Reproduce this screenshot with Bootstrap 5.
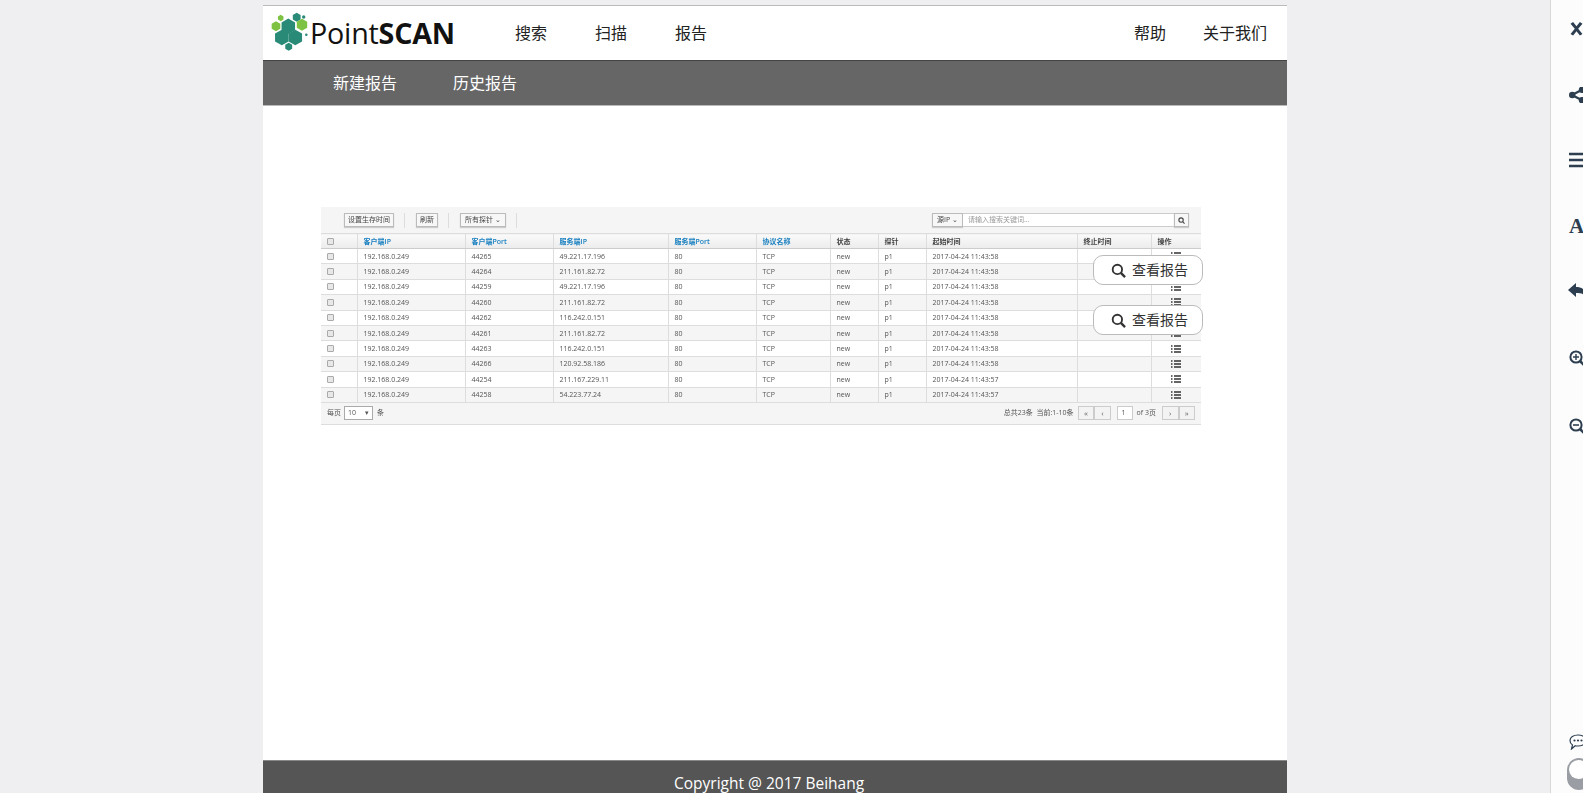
<!DOCTYPE html>
<html lang="zh-CN">
<head>
  <meta charset="UTF-8" />
  <meta name="viewport" content="width=device-width, initial-scale=1.0" />
  <title>PointSCAN</title>
  <link href="https://cdn.jsdelivr.net/npm/bootstrap@5.3.0/dist/css/bootstrap.min.css" rel="stylesheet" />
  <style>
    html, body { height: 100%; }
    body {
      background: #efeff1;
      overflow: hidden;
      font-family: "Open Sans", "Noto Sans CJK SC", sans-serif;
    }
    #pageWrap { height: 793px; }
    #mainCol { width: 1024px; margin: 5px auto 0; background: #fff; border-top: 1px solid #bbb; }
    #sidePanel { width: 33px; flex-shrink: 0; background: #fcfcfc; border-left: 1px solid #d8d8d8; padding: 22px 0 3px 18px; overflow: hidden; }

    /* header */
    #topBar { height: 55px; border-bottom: 1px solid #444; padding: 0 20px 0 5px; }
    .logoText { font-size: 28.7px; line-height: 1; color: #111; letter-spacing: -.2px; margin: 0 60px 0 0; }
    .logoText b { font-weight: 700; }
    .topLink { font-size: 16px; color: #222; padding: 0; }
    #topBar .topLink:hover { color: #222; }
    #subBar { height: 45px; background: #666; border-bottom: 1px solid #bbb; padding-left: 70px; column-gap: 56px; }
    .subLink { font-size: 16px; color: #fff; padding: 0; }
    #contentArea { padding: 101px 0 0 58px; }
    #pageFooter { height: 33px; background: #555; border-top: 1px solid #888; color: #fff; font-size: 15.5px; padding: 11px 0 0 411px; white-space: nowrap; overflow: hidden; }

    /* the report screenshot */
    #shotWrap { width: 882px; }
    #shotBox { width: 880px; height: 217px; background: #f5f5f5; filter: blur(.3px); color: #555; font-size: 7px; font-family: "Open Sans", "Noto Sans CJK SC", sans-serif; }
    .shotBar { height: 26px; padding: 0 12px 0 23px; }
    .shotBtn { height: 14px; font-size: 7px; line-height: 12px; padding: 0 3px; color: #444; background: #f7f7f7; border: 1px solid #bbb; border-radius: 0; box-shadow: 0 1px 1px #ccc; }
    .shotBtnWide { padding: 0 4px; }
    .shotSep { width: 1px; height: 15px; background: #ddd; margin: 0 11px 0 10px; }
    .shotSearch { width: 211px; height: 14px; font-size: 7px; line-height: 12px; padding: 0 5px; color: #999; background: #fff; border: 1px solid #ccc; border-left: 0; border-right: 0; }
    .shotTable { table-layout: fixed; width: 880px; margin: 0; font-size: 7px; border-top: 1px solid #ddd; }
    .shotTable th, .shotTable td { padding: 0 6px; height: 15.4px; line-height: 13px; vertical-align: middle; border-right: 1px solid #ddd; border-bottom: 1px solid #ddd; color: #555; font-weight: 400; white-space: nowrap; background: #fff; box-shadow: none; }
    .shotTable th { height: 15px; background: linear-gradient(#fafafa, #ececec); color: #444; font-weight: 600; border-bottom: 1px solid #ccc; }
    .shotTable th.sortCol { color: #1a80c0; }
    .shotTable tbody tr:nth-child(even) td { background: #f5f5f5; }
    .shotTable th:last-child, .shotTable td:last-child { border-right: 0; }
    .shotCheck { width: 7px; height: 7px; margin: 0; display: block; background: #e8e8e8; border: 1px solid #aaa; border-radius: 1px; appearance: none; }
    .shotPager { height: 22px; padding: 0 6px; border-bottom: 1px solid #ddd; }
    .shotSelect { width: 29px; height: 14px; padding: 0 3px; background: #fff; border: 1px solid #aaa; margin: 0 4px 0 3px; }
    .pageBtn { width: 16.5px; height: 14px; background: #f3f3f3; border: 1px solid #ccc; text-align: center; line-height: 11px; font-size: 8px; color: #666; }
    .pageInput { width: 16px; height: 14px; background: #fff; border: 1px solid #ccc; line-height: 12px; padding-left: 4px; margin: 0 4px 0 6px; }
    .pageOf { margin-right: 6px; }

    /* white buttons lying over the screenshot */
    .reportBtn { position: absolute; left: 772px; width: 110px; height: 30px; display: flex; align-items: center; padding: 0 0 0 17px; gap: 6px; font-size: 14px; line-height: 1; color: #333; background: #fff; border: 1px solid #bbb; border-radius: 10px; }
    .reportBtn:hover { color: #333; background: #fff; border-color: #bbb; }
    .btnTop { top: 48px; }
    .btnLow { top: 98px; }

    .sideIcon { display: block; width: 20px; height: 16px; flex-shrink: 0; margin-bottom: 49px; color: #2c3e50; }
    .sideLetter { font: 700 21px/18px "Liberation Serif", serif; color: #2c3e50; margin-bottom: 48px; flex-shrink: 0; }
    .replyIcon { margin-left: -1px; margin-bottom: 51px; }
    .zoomInIcon { margin-bottom: 52px; }
    .sideToggle { width: 24px; height: 32px; flex-shrink: 0; margin: 8px 0 0 -2px; background: #9a9da3; border-radius: 12px; padding: 2px; }
    .sideToggle span { display: block; width: 19px; height: 19px; background: #fff; border-radius: 50%; }
  </style>
</head>
<body>
  <div id="pageWrap" class="d-flex">
    <div class="flex-grow-1 d-flex">
      <div id="mainCol" class="d-flex flex-column">
        <header id="topBar" class="d-flex align-items-center flex-shrink-0">
          <svg width="42" height="50" viewBox="0 0 42 50" class="flex-shrink-0">
            <defs><path id="hexCell" d="M0-1L.866-.5V.5L0 1-.866.5V-.5z" /></defs>
            <g fill="#2a8a78">
              <use href="#hexCell" transform="translate(20.3 18.300) scale(7.800)" />
              <use href="#hexCell" transform="translate(13.8 29.500) scale(7.800)" />
              <use href="#hexCell" transform="translate(27.3 29.500) scale(7.800)" />
              <use href="#hexCell" transform="translate(20.7 38.800) scale(4)" />
              <use href="#hexCell" transform="translate(28.7 9.200) scale(4.500)" />
              <circle cx="35.700" cy="9" r="1.700" />
              <circle cx="38.300" cy="26.700" r="1.300" />
            </g>
            <g fill="#7dc242">
              <use href="#hexCell" transform="translate(34 16.700) scale(6)" />
              <use href="#hexCell" transform="translate(8 18.300) scale(5)" />
              <use href="#hexCell" transform="translate(12.700 10) scale(3.200)" />
            </g>
          </svg>
          <span class="logoText">Point<b>SCAN</b></span>
          <nav class="nav gap-5 flex-grow-1">
            <a class="nav-link topLink" href="#">搜索</a>
            <a class="nav-link topLink" href="#">扫描</a>
            <a class="nav-link topLink" href="#">报告</a>
          </nav>
          <nav class="nav" style="gap:37px">
            <a class="nav-link topLink" href="#">帮助</a>
            <a class="nav-link topLink" href="#">关于我们</a>
          </nav>
        </header>
        <nav id="subBar" class="nav align-items-center flex-shrink-0">
          <a class="nav-link subLink" href="#">新建报告</a>
          <a class="nav-link subLink" href="#">历史报告</a>
        </nav>

        <main id="contentArea" class="flex-grow-1">
          <div id="shotWrap" class="position-relative">
            <div id="shotBox">
              <div class="shotBar d-flex align-items-center">
                <span class="shotBtn">设置生存时间</span>
                <span class="shotSep"></span>
                <span class="shotBtn">刷新</span>
                <span class="shotSep"></span>
                <span class="shotBtn shotBtnWide">所有探针 ⌄</span>
                <span class="shotSep"></span>
                <span class="ms-auto shotBtn shotBtnWide">源IP ⌄</span>
                <span class="shotSearch">请输入搜索关键词...</span>
                <span class="shotBtn">
                  <svg width="7" height="7" viewBox="0 0 16 16" fill="none" stroke="#444" stroke-width="2.500"><circle cx="7" cy="7" r="5" /><path d="M11 11l4 4" /></svg>
                </span>
              </div>
              <table class="table shotTable">
                <colgroup>
                  <col style="width:36px"><col style="width:108px"><col style="width:88px"><col style="width:115px"><col style="width:88px">
                  <col style="width:74px"><col style="width:48px"><col style="width:48px"><col style="width:151px"><col style="width:74px"><col style="width:50px">
                </colgroup>
                <thead>
                  <tr>
                    <th><input class="shotCheck" type="checkbox" /></th>
                    <th class="sortCol">客户端IP</th>
                    <th class="sortCol">客户端Port</th>
                    <th class="sortCol">服务端IP</th>
                    <th class="sortCol">服务端Port</th>
                    <th class="sortCol">协议名称</th>
                    <th>状态</th>
                    <th>探针</th>
                    <th>起始时间</th>
                    <th>终止时间</th>
                    <th>操作</th>
                  </tr>
                </thead>
                <tbody id="shotRows"></tbody>
              </table>
              <div class="shotPager d-flex align-items-center">
                <span>每页</span>
                <span class="shotSelect d-flex justify-content-between align-items-center">10 <span>▾</span></span>
                <span>条</span>
                <span class="ms-auto me-1">总共23条 &nbsp;当前:1-10条</span>
                <span class="pageBtn">«</span><span class="pageBtn">‹</span>
                <span class="pageInput">1</span>
                <span class="pageOf">of 3页</span>
                <span class="pageBtn">›</span><span class="pageBtn">»</span>
              </div>
            </div>
            <button type="button" class="btn reportBtn btnTop">
              <svg width="15" height="15" viewBox="0 0 16 16" fill="none" stroke="#333" stroke-width="2"><circle cx="6.800" cy="6.800" r="5" /><path d="M10.500 10.500L15 15" stroke-width="2.500" /></svg>
              查看报告
            </button>
            <button type="button" class="btn reportBtn btnLow">
              <svg width="15" height="15" viewBox="0 0 16 16" fill="none" stroke="#333" stroke-width="2"><circle cx="6.800" cy="6.800" r="5" /><path d="M10.500 10.500L15 15" stroke-width="2.500" /></svg>
              查看报告
            </button>
          </div>
        </main>

        <footer id="pageFooter" class="flex-shrink-0">Copyright @ 2017 Beihang</footer>
      </div>
    </div>

    <aside id="sidePanel" class="d-flex flex-column">
      <svg class="sideIcon" viewBox="0 0 20 16"><path d="M3 2l3-2 4 5 4-5 3 2-5 6 5 6-3 2-4-5-4 5-3-2 5-6z" fill="currentColor" transform="translate(-1 0) scale(.85 .85)" /></svg>
      <svg class="sideIcon" viewBox="0 0 20 16"><g fill="currentColor"><circle cx="3.200" cy="8" r="3.200" /><circle cx="13" cy="2.800" r="3.200" /><circle cx="13" cy="13.200" r="3.200" /></g><path d="M3 8l10-5.200M3 8l10 5.200" stroke="currentColor" stroke-width="2.400" /></svg>
      <svg class="sideIcon" viewBox="0 0 20 16"><path d="M0 2h20M0 8h20M0 14h20" stroke="currentColor" stroke-width="2.400" /></svg>
      <div class="sideLetter">A</div>
      <svg class="sideIcon replyIcon" viewBox="0 0 20 16"><path d="M0 7L8 0v4c7 0 11 4 11 12-2-5-5-6-11-6v4z" fill="currentColor" /></svg>
      <svg class="sideIcon zoomInIcon" viewBox="0 0 20 16"><circle cx="7" cy="7" r="5.600" fill="none" stroke="currentColor" stroke-width="2" /><path d="M7 4v6M4 7h6" stroke="currentColor" stroke-width="1.400" /><path d="M11 11l5 5" stroke="currentColor" stroke-width="2.600" /></svg>
      <svg class="sideIcon" viewBox="0 0 20 16"><circle cx="7" cy="7" r="5.600" fill="none" stroke="currentColor" stroke-width="2" /><path d="M4 7h6" stroke="currentColor" stroke-width="1.600" /><path d="M11 11l5 5" stroke="currentColor" stroke-width="2.600" /></svg>
      <svg class="mt-auto flex-shrink-0" width="18" height="16" viewBox="0 0 18 16"><path d="M9 1c4.500 0 8 2.300 8 5.500S13.500 12 9 12c-1 0-2 0-2.800-.3L2.500 15l1-4C1.900 10 1 8.400 1 6.500 1 3.300 4.500 1 9 1z" fill="#fff" stroke="#2c3e50" stroke-width="1.200" /><g fill="#2c3e50"><circle cx="5.500" cy="6.500" r="1.100" /><circle cx="9" cy="6.500" r="1.100" /><circle cx="12.500" cy="6.500" r="1.100" /></g></svg>
      <div class="sideToggle"><span></span></div>
    </aside>
  </div>

  <script src="https://cdn.jsdelivr.net/npm/bootstrap@5.3.0/dist/js/bootstrap.bundle.min.js"></script>
  <script>
    // port, server ip, start time
    const shotData = [
      ["44265", "49.221.17.196", "11:43:58"],
      ["44264", "211.161.82.72", "11:43:58"],
      ["44259", "49.221.17.196", "11:43:58"],
      ["44260", "211.161.82.72", "11:43:58"],
      ["44262", "116.242.0.151", "11:43:58"],
      ["44261", "211.161.82.72", "11:43:58"],
      ["44263", "116.242.0.151", "11:43:58"],
      ["44266", "120.92.58.186", "11:43:58"],
      ["44254", "211.167.229.11", "11:43:57"],
      ["44258", "54.223.77.24", "11:43:57"]
    ];
    const listIcon = '<svg class="d-block mx-auto" width="10" height="8" viewBox="0 0 10 8"><path d="M0 1h1.500M3 1h7M0 4h1.500M3 4h7M0 7h1.500M3 7h7" stroke="#333" stroke-width="1.400"/></svg>';

    document.getElementById("shotRows").innerHTML = shotData.map((row) => `
      <tr>
        <td><input class="shotCheck" type="checkbox" /></td>
        <td>192.168.0.249</td>
        <td>${row[0]}</td>
        <td>${row[1]}</td>
        <td>80</td>
        <td>TCP</td>
        <td>new</td>
        <td>p1</td>
        <td>2017-04-24 ${row[2]}</td>
        <td></td>
        <td>${listIcon}</td>
      </tr>`).join("");
  </script>
</body>
</html>
